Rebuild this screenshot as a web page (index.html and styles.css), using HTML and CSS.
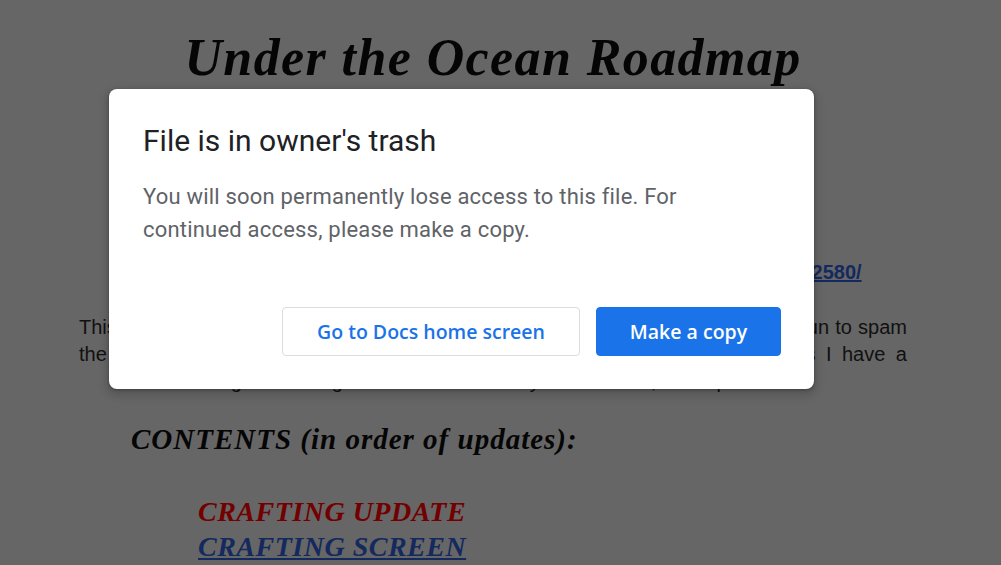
FILE: index.html
```html
<!doctype html>
<html lang="en">

<head>
    <meta charset="UTF-8">
    <title>Under the Ocean Roadmap</title>
    <link rel="stylesheet" href="styles.css">
</head>

<body>
    <div class="doc">
        <h1 class="doc-title">Under the Ocean Roadmap</h1>

        <p class="doc-link">
            <a href="#">https://www.minecraftforum.net/forums/mappings/under-the-ocean-v2802580/</a>
        </p>

        <p class="doc-text">
            <span class="line">This is the roadmap of all I plan to add into the Under the Ocean mod. I have begun to spam</span>
            <span class="line">the updates here instead of on the forum page to keep them all together, as I have a</span>
            <span class="last">long list of things to do and some may take a while, so be patient.</span>
        </p>

        <h2 class="contents">CONTENTS (in order of updates):</h2>

        <ul class="toc">
            <li class="toc-red">CRAFTING UPDATE</li>
            <li><a href="#">CRAFTING SCREEN</a></li>
        </ul>
    </div>

    <div class="dialog">
        <h3 class="dialog-title">File is in owner's trash</h3>
        <p class="dialog-text">You will soon permanently lose access to this file. For continued access, please make a copy.</p>
        <div class="dialog-btns">
            <button class="btn btn-line">Go to Docs home screen</button>
            <button class="btn btn-fill">Make a copy</button>
        </div>
    </div>
</body>

</html>
```

FILE: styles.css
```css
* {
    margin: 0;
    padding: 0;
}

ul,
li {
    list-style: none;
}

html,
body {
    height: 100%;
}

body {
    background: #666;
    overflow: hidden;
    font-family: "Liberation Sans", Arial, sans-serif;
}

.doc {
    width: 828px;
    margin-left: 79px;
}

.doc-title {
    padding-top: 32px;
    text-align: center;
    font-family: "Liberation Serif", serif;
    font-style: italic;
    font-weight: bold;
    font-size: 52px;
    line-height: 52px;
    letter-spacing: 1.4px;
    color: #050505;
}

.doc-link {
    margin-top: 176px;
    text-align: center;
    font-size: 20px;
    font-weight: bold;
    line-height: 24px;
}

.doc-link a {
    color: #14295e;
}

.doc-text {
    margin-top: 30px;
    font-size: 20px;
    line-height: 27px;
    color: #111;
}

.doc-text .line {
    display: block;
    text-align: justify;
    text-align-last: justify;
}

.doc-text .last {
    display: block;
    text-align: center;
}

.contents {
    margin-top: 27px;
    margin-left: 52px;
    font-family: "Liberation Serif", serif;
    font-style: italic;
    font-weight: bold;
    font-size: 29px;
    line-height: 34px;
    letter-spacing: 1px;
    color: #050505;
}

.toc {
    margin-top: 38px;
    margin-left: 119px;
    font-family: "Liberation Serif", serif;
    font-style: italic;
    font-weight: bold;
    font-size: 28px;
    line-height: 35px;
    letter-spacing: 0.5px;
}

.toc-red {
    color: #720000;
}

.toc a {
    color: #14295e;
}

/* dialog */
.dialog {
    position: absolute;
    top: 89px;
    left: 109px;
    width: 705px;
    height: 300px;
    box-sizing: border-box;
    padding: 34px 33px 33px 34px;
    background: #fff;
    border-radius: 8px;
    box-shadow: 0 1px 3px rgba(0, 0, 0, .3), 0 4px 8px 3px rgba(0, 0, 0, .15);
    display: flex;
    flex-direction: column;
}

.dialog-title {
    font-family: Roboto, sans-serif;
    font-weight: 400;
    font-size: 30px;
    line-height: 36px;
    color: #202124;
}

.dialog-text {
    margin-top: 21px;
    width: 580px;
    font-family: Roboto, sans-serif;
    font-size: 22px;
    line-height: 33px;
    letter-spacing: 0.2px;
    color: #5f6368;
}

.dialog-btns {
    margin-top: auto;
    display: flex;
    justify-content: flex-end;
    gap: 16px;
}

.btn {
    height: 49px;
    padding: 0 30px;
    border-radius: 4px;
    font-family: "Open Sans", sans-serif;
    font-size: 19.5px;
    font-weight: 600;
    cursor: pointer;
}

.btn-line {
    width: 298px;
    background: #fff;
    border: 1px solid #dadce0;
    color: #1a73e8;
}

.btn-fill {
    width: 185px;
    background: #1a73e8;
    border: 1px solid #1a73e8;
    color: #fff;
}
```
